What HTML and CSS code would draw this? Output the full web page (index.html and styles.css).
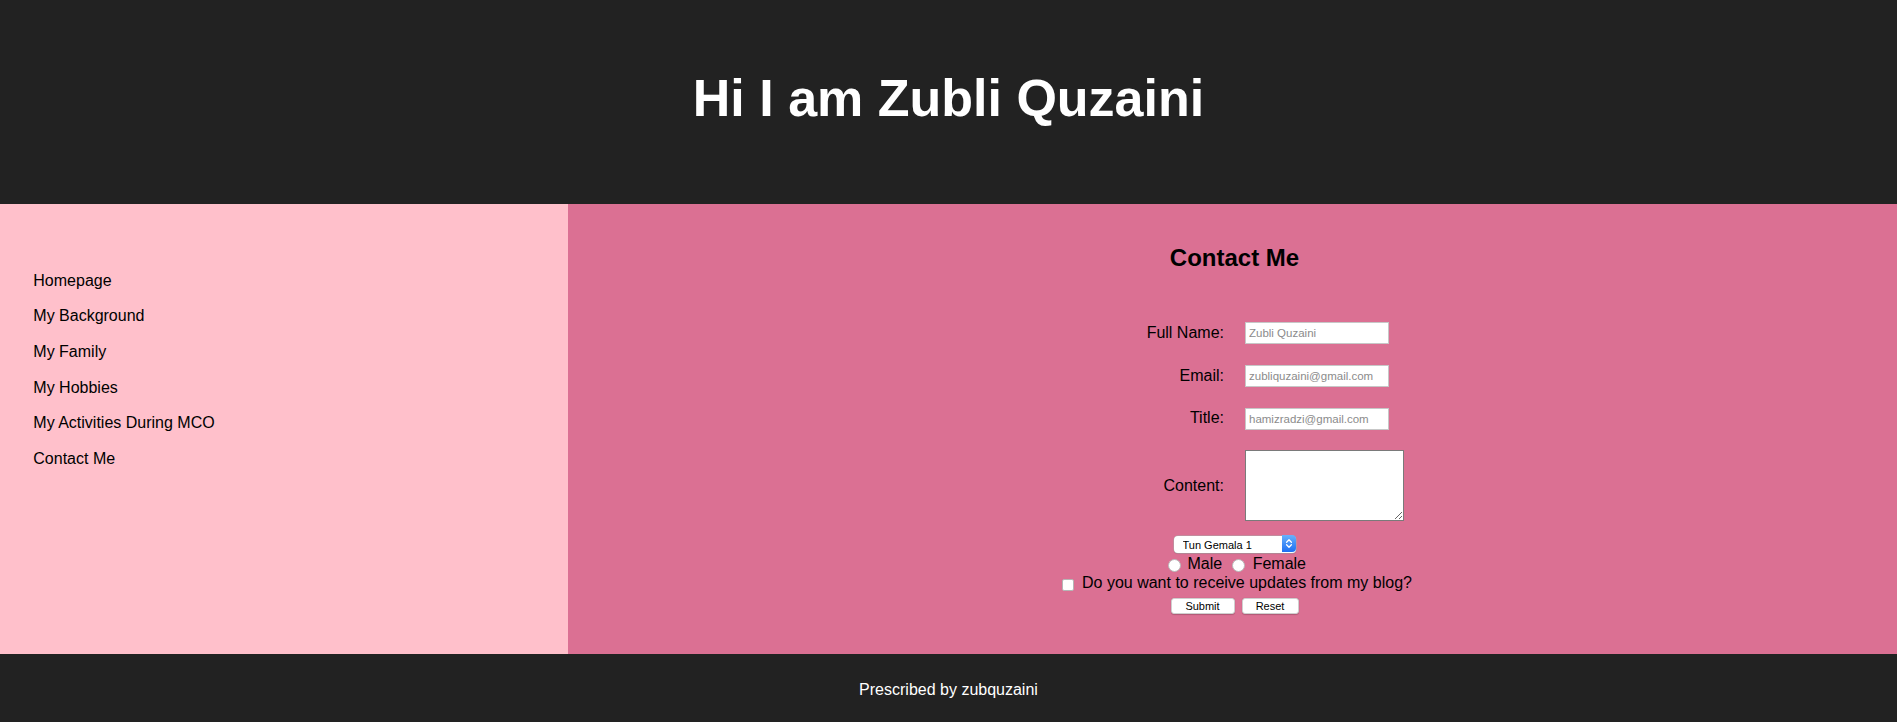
FILE: index.html
```html
<!DOCTYPE html>
<html lang="en">
<head>
<meta charset="utf-8">
<title>Zubli Quzaini - Contact Me</title>
<link rel="stylesheet" href="styles.css">
</head>
<body>
<header class="site-header">
  <h1 class="site-title">Hi I am Zubli Quzaini</h1>
</header>
<div class="layout">
  <nav class="sidebar">
    <ul class="nav-list">
      <li><a href="#">Homepage</a></li>
      <li><a href="#">My Background</a></li>
      <li><a href="#">My Family</a></li>
      <li><a href="#">My Hobbies</a></li>
      <li><a href="#">My Activities During MCO</a></li>
      <li><a href="#">Contact Me</a></li>
    </ul>
  </nav>
  <main class="content">
    <h2 class="content-title">Contact Me</h2>
    <form class="contact-form">
      <div class="form-grid">
        <label class="form-label" for="fullname">Full Name:</label>
        <div class="form-field"><input class="text-input" id="fullname" type="text" placeholder="Zubli Quzaini"></div>
        <label class="form-label" for="email">Email:</label>
        <div class="form-field"><input class="text-input" id="email" type="text" placeholder="zubliquzaini@gmail.com"></div>
        <label class="form-label" for="title">Title:</label>
        <div class="form-field"><input class="text-input" id="title" type="text" placeholder="hamizradzi@gmail.com"></div>
        <label class="form-label" for="content">Content:</label>
        <div class="form-field"><textarea class="text-area" id="content"></textarea></div>
      </div>
      <div class="select-wrap">
        <select class="room-select">
          <option>Tun Gemala 1</option>
        </select>
        <span class="select-arrow">
          <svg width="14" height="17" viewBox="0 0 14 17">
            <defs>
              <linearGradient id="selblue" x1="0" y1="0" x2="0" y2="1">
                <stop offset="0" stop-color="#6ab1fb"/>
                <stop offset="1" stop-color="#1c6ff3"/>
              </linearGradient>
            </defs>
            <path d="M0 0H10A4 4 0 0 1 14 4V13A4 4 0 0 1 10 17H0Z" fill="url(#selblue)"/>
            <path d="M4.6 7.2L7 4.8L9.4 7.2" fill="none" stroke="#fff" stroke-width="1.3" stroke-linecap="round" stroke-linejoin="round"/>
            <path d="M4.6 9.8L7 12.2L9.4 9.8" fill="none" stroke="#fff" stroke-width="1.3" stroke-linecap="round" stroke-linejoin="round"/>
          </svg>
        </span>
      </div>
      <div class="option-row radio-row">
        <input class="radio" type="radio" name="gender" id="male">
        <label class="radio-label male-label" for="male">Male</label>
        <input class="radio" type="radio" name="gender" id="female">
        <label class="radio-label" for="female">Female</label>
      </div>
      <div class="option-row check-row">
        <input class="checkbox" type="checkbox" id="updates">
        <label for="updates">Do you want to receive updates from my blog?</label>
      </div>
      <div class="button-row">
        <button class="btn btn-submit" type="submit">Submit</button>
        <button class="btn btn-reset" type="reset">Reset</button>
      </div>
    </form>
  </main>
</div>
<footer class="site-footer">Prescribed by zubquzaini</footer>
</body>
</html>
```

FILE: styles.css
```css
html, body {
  margin: 0;
  padding: 0;
}

body {
  font-family: "Liberation Sans", Arial, Helvetica, sans-serif;
  color: #000;
}

.site-header {
  background: #222222;
  height: 204px;
  box-sizing: border-box;
  padding-top: 68px;
  text-align: center;
  color: #ffffff;
}

.site-title {
  margin: 0;
  font-size: 52px;
  font-weight: bold;
  line-height: normal;
}

.layout {
  display: flex;
  height: 450px;
}

.sidebar {
  flex: none;
  width: 568px;
  background: #ffc0cb;
}

.nav-list {
  list-style: none;
  margin: 0;
  padding: 58.8px 0 0 33.3px;
}

.nav-list li {
  font-size: 16px;
  line-height: 35.6px;
}

.nav-list a {
  color: #000;
  text-decoration: none;
}

.content {
  flex: 1;
  background: #db7093;
  padding: 40px 0 0 4px;
  display: flex;
  flex-direction: column;
  align-items: center;
}

.content-title {
  margin: 0;
  font-size: 24px;
  font-weight: bold;
  line-height: normal;
}

.contact-form {
  width: 100%;
  margin-top: 50.3px;
  display: flex;
  flex-direction: column;
  align-items: center;
}

.form-grid {
  width: 100%;
  display: grid;
  grid-template-columns: 1fr 1fr;
  column-gap: 21px;
  row-gap: 20.7px;
  align-items: center;
}

.form-label {
  text-align: right;
  font-size: 16px;
  line-height: 18.4px;
}

.form-field {
  display: flex;
}

.text-input {
  width: 144px;
  height: 22px;
  box-sizing: border-box;
  margin: 0;
  border: 1px solid #c7c7c7;
  padding: 0 3px;
  background: #ffffff;
  font-family: "Liberation Sans", Arial, sans-serif;
  font-size: 11.5px;
  outline: none;
}

.text-input::placeholder {
  color: #8b8b8b;
}

.text-area {
  width: 159px;
  height: 71px;
  box-sizing: border-box;
  margin: 0;
  border: 1px solid #7a7a7a;
  padding: 2px;
  background: #ffffff;
  resize: both;
  font-family: "Liberation Mono", monospace;
  font-size: 12px;
}

.select-wrap {
  position: relative;
  width: 122px;
  height: 17px;
  margin-top: 13.5px;
}

.room-select {
  -webkit-appearance: none;
  appearance: none;
  width: 100%;
  height: 100%;
  margin: 0;
  border: none;
  border-radius: 4px;
  background: #ffffff;
  box-shadow: 0 0 0 0.5px #a9a9a9, 0 1px 1px rgba(0, 0, 0, 0.15);
  padding: 0 0 0 9px;
  font-family: "Liberation Sans", Arial, sans-serif;
  font-size: 11px;
  color: #000;
}

.select-arrow {
  position: absolute;
  top: 0;
  right: 0;
  width: 14px;
  height: 17px;
  display: flex;
  pointer-events: none;
}

.option-row {
  display: flex;
  align-items: center;
  font-size: 16px;
  line-height: 18.4px;
  padding-left: 5px;
}

.radio-row {
  margin-top: 3px;
  min-height: 19px;
}

.radio {
  -webkit-appearance: none;
  appearance: none;
  width: 13px;
  height: 13px;
  box-sizing: border-box;
  margin: 3px 6.5px 0 0;
  border: 1px solid #b9b9b9;
  border-radius: 50%;
  background: #ffffff;
}

.radio-label + .radio {
  margin-right: 7.5px;
}

.male-label {
  margin-right: 10px;
}

.check-row {
  margin-top: 0.5px;
}

.checkbox {
  -webkit-appearance: none;
  appearance: none;
  width: 12px;
  height: 12px;
  box-sizing: border-box;
  margin: 3px 8px 0 0;
  border: 1px solid #b5b5b5;
  border-radius: 2px;
  background: #ffffff;
}

.button-row {
  display: flex;
  gap: 7px;
  margin-top: 5.5px;
}

.btn {
  height: 16px;
  box-sizing: border-box;
  margin: 0;
  padding: 0;
  border: 1px solid #cfcfcf;
  border-radius: 3px;
  background: #ffffff;
  box-shadow: 0 0.5px 1px rgba(0, 0, 0, 0.2);
  font-family: "Liberation Sans", Arial, sans-serif;
  font-size: 11px;
  line-height: 14px;
  color: #000;
}

.btn-submit {
  width: 64px;
}

.btn-reset {
  width: 57px;
}

.site-footer {
  height: 68px;
  box-sizing: border-box;
  padding-top: 27px;
  background: #222222;
  color: #ffffff;
  text-align: center;
  font-size: 16px;
  line-height: normal;
}
```
